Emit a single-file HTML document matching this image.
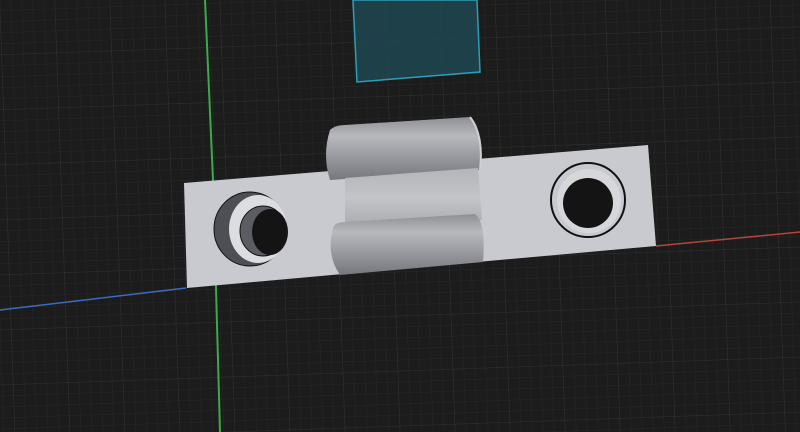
<!DOCTYPE html>
<html><head><style>
html,body{margin:0;padding:0;background:#1c1c1c;width:800px;height:432px;overflow:hidden}
</style></head><body>
<svg width="800" height="432" viewBox="0 0 800 432" xmlns="http://www.w3.org/2000/svg">
<defs>
<pattern id="g" width="11" height="11" patternUnits="userSpaceOnUse" patternTransform="rotate(-2)">
<path d="M11 0V11M0 11H11" stroke="#272727" stroke-width="1" fill="none"/>
</pattern>
<pattern id="G" width="55" height="55" patternUnits="userSpaceOnUse" patternTransform="rotate(-2)">
<path d="M55 0V55M0 55H55" stroke="#2f2f2f" stroke-width="1" fill="none"/>
</pattern>
<linearGradient id="cyl" x1="0" y1="0" x2="0" y2="1">
<stop offset="0" stop-color="#8e8f94"/><stop offset="0.3" stop-color="#b8b9bd"/><stop offset="0.55" stop-color="#a0a1a6"/><stop offset="1" stop-color="#76777c"/>
</linearGradient>
<linearGradient id="mid" x1="0" y1="0" x2="0" y2="1">
<stop offset="0" stop-color="#b4b5b9"/><stop offset="0.5" stop-color="#c3c4c8"/><stop offset="1" stop-color="#a9aaae"/>
</linearGradient>
</defs>
<rect width="800" height="432" fill="#1c1c1c"/>
<rect width="800" height="432" fill="url(#g)"/>
<rect width="800" height="432" fill="url(#G)"/>
<polygon points="353,0 477,0 480,72 357,82" fill="#1f4a55" fill-opacity="0.8" stroke="#2aa0b8" stroke-width="1.5"/>
<path d="M205,0 L213,180 L220,432" stroke="#3fa84a" stroke-width="2" fill="none"/>
<path d="M0,310 L186,288" stroke="#3a6cc0" stroke-width="1.5"/>
<path d="M656,246 L800,232" stroke="#b8443a" stroke-width="1.5"/>
<polygon points="184,183 648,145 656,246 187,288" fill="#c9cacf"/>
<path d="M330,130 Q335,125 345,125 L470,117 Q482,125 480,170 L330,180 Q322,155 330,130Z" fill="url(#cyl)"/>
<path d="M345,178 L478,168 L482,220 L345,228Z" fill="url(#mid)"/>
<path d="M333,228 Q335,222 345,222 L475,214 Q486,222 483,262 L340,275 Q326,255 333,228Z" fill="url(#cyl)"/>
<path d="M470,117 Q484,135 480,170" stroke="#d0d0d3" stroke-width="2" fill="none"/>
<!-- left hole -->
<ellipse cx="250" cy="229" rx="36" ry="37" fill="#4e4f54" stroke="#111" stroke-width="1"/>
<ellipse cx="258" cy="229" rx="29" ry="34" fill="#dcdde0"/>
<ellipse cx="263" cy="231" rx="23" ry="25" fill="#5c5d62" stroke="#111" stroke-width="1"/>
<ellipse cx="270" cy="232" rx="18" ry="23" fill="#141414"/>
<!-- right hole -->
<ellipse cx="588" cy="200" rx="37" ry="37" fill="#c9cacf" stroke="#111" stroke-width="2"/>
<ellipse cx="589" cy="201" rx="32" ry="32" fill="#d6d7da"/>
<ellipse cx="588" cy="203" rx="25" ry="25" fill="#141414"/>
</svg>
</body></html>
